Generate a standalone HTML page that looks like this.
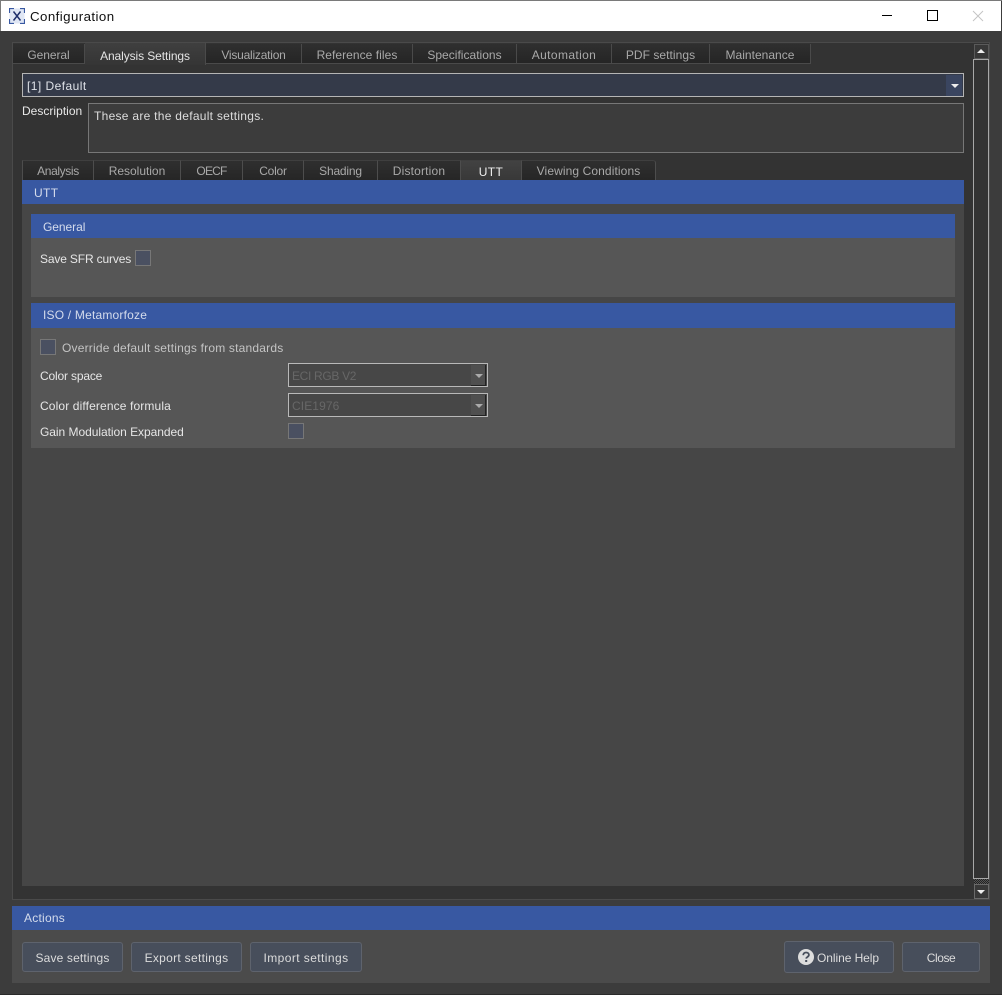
<!DOCTYPE html>
<html><head><meta charset="utf-8"><title>Configuration</title>
<style>
html,body{margin:0;padding:0;background:#3c3c3c;width:1002px;height:995px;overflow:hidden}
body{position:relative;font-family:"Liberation Sans","DejaVu Sans",sans-serif;font-size:12px;letter-spacing:.38px;color:#e6e6e6}
div{position:absolute;box-sizing:border-box}
.t{white-space:nowrap;line-height:16px;height:16px}
.tab{top:44px;height:20px;background:linear-gradient(#2f2f2f,#252525);border-right:1px solid #4a4a4a;border-bottom:1px solid #4a4a4a;color:#a9a9a9;text-align:center;line-height:22px;white-space:nowrap}
.sub{top:160px;height:20px;background:linear-gradient(#2f2f2f,#262626);border-right:1px solid #4d4d4d;color:#a9a9a9;text-align:center;line-height:21px;white-space:nowrap;border-top:1px solid #3f3f3f}
.h{background:#3858a2;color:#d5dcec;line-height:25px;white-space:nowrap}
.cb{width:16px;height:16px;background:#4a5061;border:1px solid #777}
.btn{background:#474e5b;border:1px solid #5e636d;border-radius:3px;text-align:center;color:#dcdcdc;line-height:30px;white-space:nowrap}
.combo{left:288px;width:200px;height:24px;background:#474747;border:1px solid #b9b9b9;color:#676767;padding-left:3px;line-height:24px}
.drop{right:1px;top:1px;width:15px;height:21px;background:#4f4f4f;border-right:1px solid #222;border-bottom:1px solid #222}
</style></head><body>
<div style="left:0;top:0;width:1002px;height:1px;background:#7a7a7a"></div>
<div style="left:0;top:1px;width:1px;height:30px;background:#7a7a7a"></div>
<div style="left:1px;top:1px;width:1000px;height:30px;background:#fff"></div>
<svg style="position:absolute;left:9px;top:8px" width="16" height="16" viewBox="0 0 16 16"><rect x=".5" y=".5" width="15" height="15" fill="#dfe6f4"/><path d="M.5 5V.5H5M11 .5h4.500V5M15.500 11v4.500H11M5 15.500H.5V11" fill="none" stroke="#3858a2" stroke-width="1.200"/><path d="M4.500 3.500l7 9M11.500 3.500l-7 9" stroke="#1f2f6b" stroke-width="1.500"/></svg>
<div class="t" style="left:30px;top:9px;color:#111;font-size:13.3px;letter-spacing:.42px">Configuration</div>
<div style="left:882px;top:15px;width:10px;height:1px;background:#000"></div>
<div style="left:927px;top:10px;width:11px;height:11px;border:1px solid #000"></div>
<svg style="position:absolute;left:972px;top:10px" width="12" height="12"><path d="M1 1l10 10M11 1L1 11" stroke="#c4c4c4" stroke-width="1"/></svg>

<div style="left:12px;top:42px;width:978px;height:858px;background:#333;border:1px solid #4a4a4a"></div>
<div class="tab" style="left:13px;width:72px;letter-spacing:-.05px">General</div>
<div style="left:85px;top:43px;width:121px;height:22px;background:linear-gradient(#3f3f3f,#353535);border-right:1px solid #4a4a4a;color:#e4e4e4;text-align:center;line-height:26px;white-space:nowrap;letter-spacing:-.09px">Analysis Settings</div>
<div class="tab" style="left:206px;width:96px;letter-spacing:-.22px">Visualization</div>
<div class="tab" style="left:302px;width:111px;letter-spacing:.05px">Reference files</div>
<div class="tab" style="left:413px;width:104px;letter-spacing:.02px">Specifications</div>
<div class="tab" style="left:517px;width:95px">Automation</div>
<div class="tab" style="left:612px;width:98px;letter-spacing:.05px">PDF settings</div>
<div class="tab" style="left:710px;width:101px;letter-spacing:.02px">Maintenance</div>

<div style="left:22px;top:73px;width:942px;height:24px;background:#343a49;border:1px solid #b5b5b5;padding-left:4px;line-height:24px;color:#dfe2e8;letter-spacing:.45px">[1] Default
<div style="right:1px;top:1px;width:16px;height:21px;background:#3a4560"></div>
<div style="right:4px;top:10px;width:0;height:0;border-left:4px solid transparent;border-right:4px solid transparent;border-top:4px solid #eee"></div></div>
<div class="t" style="left:22px;top:103px;color:#e8e8e8;letter-spacing:.02px">Description</div>
<div style="left:88px;top:103px;width:876px;height:50px;background:#3c3c3c;border:1px solid #777;padding:4px 5px;line-height:16px;color:#ddd;letter-spacing:.28px">These are the default settings.</div>

<div class="sub" style="left:22px;width:72px;border-left:1px solid #4d4d4d;letter-spacing:-.37px">Analysis</div>
<div class="sub" style="left:94px;width:87px;letter-spacing:-.02px">Resolution</div>
<div class="sub" style="left:181px;width:62px;letter-spacing:-.8px">OECF</div>
<div class="sub" style="left:243px;width:61px;letter-spacing:-.22px">Color</div>
<div class="sub" style="left:304px;width:74px;letter-spacing:-.19px">Shading</div>
<div class="sub" style="left:378px;width:83px;letter-spacing:.18px">Distortion</div>
<div class="sub" style="left:461px;width:61px;background:linear-gradient(#424242,#383838);color:#f0f0f0;line-height:23px">UTT</div>
<div class="sub" style="left:522px;width:134px;border-top-right-radius:3px;letter-spacing:.1px">Viewing Conditions</div>

<div style="left:22px;top:204px;width:942px;height:682px;background:#464646"></div>
<div class="h" style="left:22px;top:180px;width:942px;height:24px;padding-left:12px;line-height:26px">UTT</div>

<div class="h" style="left:31px;top:214px;width:924px;height:24px;padding-left:12px;line-height:26px;letter-spacing:-.05px">General</div>
<div style="left:31px;top:238px;width:924px;height:59px;background:#565656"></div>
<div class="t" style="left:40px;top:251px;letter-spacing:-.15px">Save SFR curves</div>
<div class="cb" style="left:135px;top:250px"></div>

<div class="h" style="left:31px;top:303px;width:924px;height:25px;padding-left:12px;letter-spacing:.2px">ISO / Metamorfoze</div>
<div style="left:31px;top:328px;width:924px;height:120px;background:#565656"></div>
<div class="cb" style="left:40px;top:339px"></div>
<div class="t" style="left:62px;top:340px;color:#c4c4c4;letter-spacing:.2px">Override default settings from standards</div>
<div class="t" style="left:40px;top:368px;letter-spacing:-.17px">Color space</div>
<div class="combo" style="top:363px"><span style="letter-spacing:-.32px">ECI RGB V2</span><div class="drop"></div><div style="right:4px;top:10px;width:0;height:0;border-left:4px solid transparent;border-right:4px solid transparent;border-top:4px solid #aaa"></div></div>
<div class="t" style="left:40px;top:398px;letter-spacing:.13px">Color difference formula</div>
<div class="combo" style="top:393px"><span style="letter-spacing:.1px">CIE1976</span><div class="drop"></div><div style="right:4px;top:10px;width:0;height:0;border-left:4px solid transparent;border-right:4px solid transparent;border-top:4px solid #aaa"></div></div>
<div class="t" style="left:40px;top:424px;letter-spacing:-.04px">Gain Modulation Expanded</div>
<div class="cb" style="left:288px;top:423px"></div>

<div style="left:974px;top:44px;width:15px;height:15px;background:#383838;border:1px solid #5a5a5a"></div>
<div style="left:977px;top:49px;width:0;height:0;border-left:4px solid transparent;border-right:4px solid transparent;border-bottom:4px solid #eee"></div>
<div style="left:973px;top:59px;width:16px;height:820px;background:#333;border:1px solid #a8a8a8"></div>
<div style="left:974px;top:879px;width:15px;height:5px;background:repeating-conic-gradient(#222 0 25%,#555 0 50%) 0 0/2px 2px"></div>
<div style="left:974px;top:884px;width:15px;height:15px;background:#383838;border:1px solid #6a6a6a"></div>
<div style="left:977px;top:890px;width:0;height:0;border-left:4px solid transparent;border-right:4px solid transparent;border-top:4px solid #eee"></div>

<div class="h" style="left:12px;top:906px;width:978px;height:24px;padding-left:12px;letter-spacing:.24px">Actions</div>
<div style="left:12px;top:930px;width:978px;height:53px;background:#4b4b4b"></div>
<div class="btn" style="left:22px;top:942px;width:101px;height:30px;letter-spacing:.15px">Save settings</div>
<div class="btn" style="left:131px;top:942px;width:111px;height:30px;letter-spacing:.3px">Export settings</div>
<div class="btn" style="left:250px;top:942px;width:112px;height:30px;letter-spacing:.42px">Import settings</div>
<div class="btn" style="left:784px;top:941px;width:110px;height:32px;line-height:32px;padding-left:18px;letter-spacing:-.07px">Online Help</div>
<svg style="position:absolute;left:798px;top:949px" width="16" height="16" viewBox="0 0 16 16"><circle cx="8" cy="8" r="8" fill="#ddd"/><path d="M5.200 6.200C5.300 4.500 6.500 3.500 8.100 3.500c1.700 0 2.800 1 2.800 2.300 0 1.100-.7 1.700-1.500 2.200-.8.500-1.100.8-1.100 1.600" fill="none" stroke="#474e5b" stroke-width="1.800"/><rect x="7.200" y="11" width="2" height="2" fill="#474e5b"/></svg>
<div class="btn" style="left:902px;top:942px;width:78px;height:30px;letter-spacing:-.42px">Close</div>
<div style="left:0;top:994px;width:1002px;height:1px;background:#2a2a2a"></div>
</body></html>
